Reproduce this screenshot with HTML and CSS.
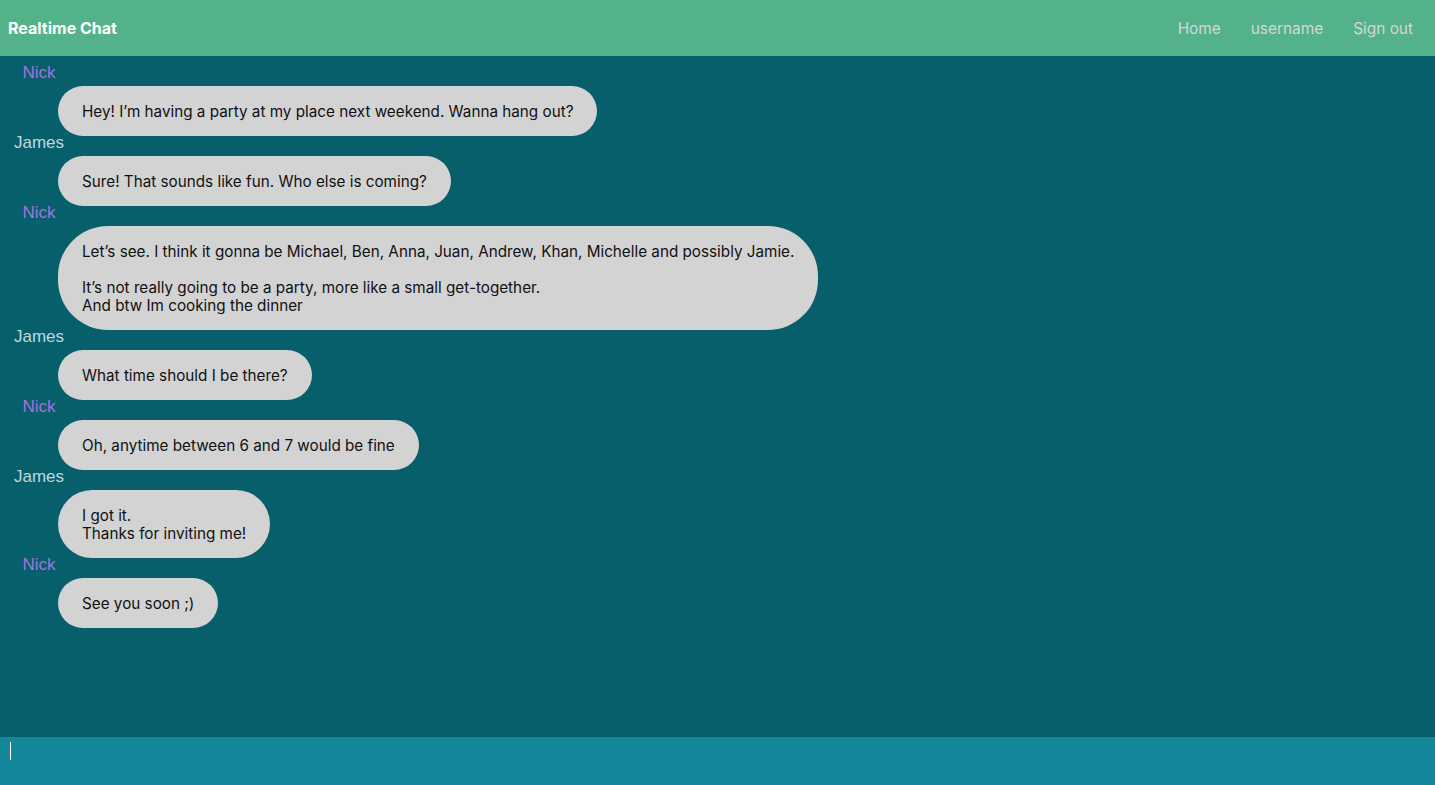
FILE: index.html
```html
<!DOCTYPE html>
<html lang="en">
<head>
<meta charset="utf-8">
<title>Realtime Chat</title>
<link rel="stylesheet" href="styles.css">
</head>
<body>
<div class="app">
  <header class="topbar">
    <div class="brand">Realtime Chat</div>
    <nav class="nav">
      <a class="nav-link" href="#">Home</a>
      <a class="nav-link" href="#">username</a>
      <a class="nav-link" href="#">Sign out</a>
    </nav>
  </header>
  <main class="messages">
    <div class="msg">
      <div class="name nick">Nick</div>
      <div class="bubble">Hey! I’m having a party at my place next weekend. Wanna hang out?</div>
    </div>
    <div class="msg">
      <div class="name james">James</div>
      <div class="bubble">Sure! That sounds like fun. Who else is coming?</div>
    </div>
    <div class="msg">
      <div class="name nick">Nick</div>
      <div class="bubble">Let’s see. I think it gonna be Michael, Ben, Anna, Juan, Andrew, Khan, Michelle and possibly Jamie.<br><br>It’s not really going to be a party, more like a small get-together.<br>And btw Im cooking the dinner</div>
    </div>
    <div class="msg">
      <div class="name james">James</div>
      <div class="bubble">What time should I be there?</div>
    </div>
    <div class="msg">
      <div class="name nick">Nick</div>
      <div class="bubble">Oh, anytime between 6 and 7 would be fine</div>
    </div>
    <div class="msg">
      <div class="name james">James</div>
      <div class="bubble">I got it.<br>Thanks for inviting me!</div>
    </div>
    <div class="msg">
      <div class="name nick">Nick</div>
      <div class="bubble">See you soon ;)</div>
    </div>
  </main>
  <footer class="composer">
    <div class="input"><span class="caret"></span></div>
  </footer>
</div>
</body>
</html>
```

FILE: styles.css
```css
* { box-sizing: border-box; }
html, body { margin: 0; padding: 0; height: 100%; }
body {
  font-family: Inter, "Noto Sans", sans-serif;
  background: #075f6b;
}
.app {
  display: flex;
  flex-direction: column;
  height: 100vh;
}
.topbar {
  height: 56px;
  flex: 0 0 56px;
  background: #53b28a;
  display: flex;
  align-items: center;
  justify-content: space-between;
  padding: 0 7px 0 8px;
}
.brand {
  color: #ffffff;
  font-weight: 700;
  font-size: 16px;
}
.nav { display: flex; align-items: center; }
.nav-link {
  color: #d6d6d6;
  text-decoration: none;
  font-size: 15.4px;
  padding: 0 15px;
}
.messages {
  flex: 1;
  padding-top: 5px;
  overflow: hidden;
}
.msg { display: flex; flex-direction: column; align-items: flex-start; }
.msg + .msg { margin-top: -5px; }
.name {
  width: 64px;
  margin-left: 7px;
  text-align: center;
  font-family: "Liberation Sans", Arial, sans-serif;
  font-size: 17px;
  line-height: 20px;
  padding-top: 2px;
  height: 22px;
  margin-bottom: 3px;
}
.nick { color: #a572dc; }
.james { color: #bcd9e0; }
.bubble {
  margin-left: 58px;
  background: #d3d3d3;
  color: #111111;
  font-size: 15.25px;
  line-height: 18px;
  padding: 17px 24px 15px;
  border-radius: 50px;
}
.composer {
  flex: 0 0 48px;
  height: 48px;
  background: #12889a;
}
.input {
  height: 100%;
  padding: 5px 10px;
}
.caret {
  display: block;
  width: 1px;
  height: 18px;
  background: #ffffff;
}
```
